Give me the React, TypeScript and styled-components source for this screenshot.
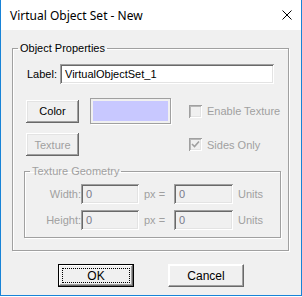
import React from "react"
import styled, { createGlobalStyle } from "styled-components"

const GlobalStyle = createGlobalStyle`
    html, body {
        margin: 0;
        padding: 0;
        background: #ffffff;
    }
    body {
        font-family: "Liberation Sans", Arial, sans-serif;
        font-size: 11px;
    }
`

const Window = styled.div`
    width: 302px;
    height: 296px;
    box-sizing: border-box;
    border: 1px solid #1883d7;
    border-top: none;
    background: #f0f0f0;
    display: flex;
    flex-direction: column;
`

const TitleBar = styled.div`
    height: 30px;
    background: #ffffff;
    display: flex;
    align-items: center;
    justify-content: space-between;
    padding: 0 9px 0 8px;
    font-family: "Noto Sans", "Open Sans", sans-serif;
    font-size: 12px;
    color: #000;
`

const Body = styled.div`
    padding: 12px 12px 0 11px;
    display: flex;
    flex-direction: column;
`

const Group = styled.fieldset<{ $w: number; $pb: number }>`
    margin: 0;
    padding: 0 0 ${(p) => p.$pb}px 0;
    min-width: 0;
    width: ${(p) => p.$w}px;
    box-sizing: border-box;
    border: 1px solid #a0a0a0;
    box-shadow: inset 1px 1px #ffffff, 1px 1px #ffffff;
`

const Legend = styled.legend<{ $disabled?: boolean }>`
    margin-left: 5px;
    padding: 0 2px;
    line-height: 13px;
    color: ${(p) => (p.$disabled ? "#a0a0a0" : "#000")};
`

const Row = styled.div<{ $mt: number; $pl: number }>`
    display: flex;
    align-items: center;
    margin-top: ${(p) => p.$mt}px;
    padding-left: ${(p) => p.$pl}px;
`

const Text = styled.span<{ $w?: number; $disabled?: boolean; $right?: boolean; $ml?: number }>`
    display: inline-block;
    width: ${(p) => (p.$w ? `${p.$w}px` : "auto")};
    margin-left: ${(p) => p.$ml ?? 0}px;
    text-align: ${(p) => (p.$right ? "right" : "left")};
    color: ${(p) => (p.$disabled ? "#a0a0a0" : "#000")};
    white-space: nowrap;
`

const Input = styled.div<{ $w: number; $disabled?: boolean }>`
    width: ${(p) => p.$w}px;
    height: 20px;
    box-sizing: border-box;
    background: ${(p) => (p.$disabled ? "#f0f0f0" : "#ffffff")};
    box-shadow: inset 1px 1px #a0a0a0, inset -1px -1px #ffffff, inset 2px 2px #696969,
        inset -2px -2px #e3e3e3;
    padding: 0 0 0 5px;
    line-height: 20px;
    color: ${(p) => (p.$disabled ? "#7a7a8a" : "#000")};
`

const Button = styled.div<{ $disabled?: boolean; $ml?: number }>`
    width: 53px;
    height: 23px;
    margin-left: ${(p) => p.$ml ?? 0}px;
    box-sizing: border-box;
    background: #f0f0f0;
    box-shadow: inset -1px -1px #696969, inset 1px 1px #ffffff, inset -2px -2px #a0a0a0,
        inset 2px 2px #e3e3e3;
    display: flex;
    align-items: center;
    justify-content: center;
    color: ${(p) => (p.$disabled ? "#a0a0a0" : "#000")};
`

const DialogButton = styled.div<{ $default?: boolean }>`
    position: relative;
    width: 76px;
    height: 23px;
    box-sizing: border-box;
    background: #f0f0f0;
    border: 1px solid ${(p) => (p.$default ? "#000" : "transparent")};
    box-shadow: ${(p) =>
        p.$default
            ? "inset -1px -1px #696969, inset 1px 1px #ffffff, inset -2px -2px #a0a0a0"
            : "inset -1px -1px #a0a0a0, inset 1px 1px #ffffff"};
    display: flex;
    align-items: center;
    justify-content: center;
    font-size: 12px;
    color: #000;
    ${(p) => (p.$default ? "" : "border-top-color: #ffffff; border-left-color: #ffffff; border-right-color: #696969; border-bottom-color: #696969;")}
`

const FocusRect = styled.div`
    position: absolute;
    inset: 3px;
    border: 1px dotted #000;
`

const Swatch = styled.div`
    width: 81px;
    height: 26px;
    margin-left: 11px;
    box-sizing: border-box;
    border: 1px solid #a0a0a0;
    box-shadow: 1px 1px #ffffff;
    padding: 2px;
    background: #f0f0f0;
    display: flex;
`

const SwatchFill = styled.div`
    flex: 1;
    background: #c8c8ff;
`

const Check = styled.label<{ $ml: number }>`
    display: flex;
    align-items: center;
    margin-left: ${(p) => p.$ml}px;
    color: #a0a0a0;
`

const CheckBox = styled.span`
    width: 13px;
    height: 13px;
    box-sizing: border-box;
    background: #f0f0f0;
    box-shadow: inset 1px 1px #a0a0a0, inset -1px -1px #ffffff, inset 2px 2px #b8b8b8,
        inset -2px -2px #e3e3e3;
    margin-right: 5px;
    display: flex;
    align-items: center;
    justify-content: center;
`

const ButtonRow = styled.div`
    display: flex;
    justify-content: center;
    gap: 34px;
    margin-top: 13px;
    padding-left: 1px;
`

const CloseIcon = () => (
    <svg width="10" height="10" viewBox="0 0 10 10">
        <path d="M0.5 0.5 L9.5 9.5 M9.5 0.5 L0.5 9.5" stroke="#000" strokeWidth="1" fill="none" />
    </svg>
)

const CheckMark = () => (
    <svg width="9" height="9" viewBox="0 0 9 9">
        <path d="M1 4 L3.5 6.5 L8 1.5" stroke="#a0a0a0" strokeWidth="1.6" fill="none" />
    </svg>
)

export default function App() {
    return (
        <>
            <GlobalStyle />
            <Window>
                <TitleBar>
                    <span style={{ marginLeft: 1 }}>Virtual Object Set - New</span>
                    <CloseIcon />
                </TitleBar>
                <Body>
                    <Group $w={277} $pb={12}>
                        <Legend>Object Properties</Legend>
                        <Row $mt={9} $pl={14}>
                            <Text $w={33}>Label:</Text>
                            <Input $w={214}>VirtualObjectSet_1</Input>
                        </Row>
                        <Row $mt={14} $pl={13}>
                            <Button>Color</Button>
                            <Swatch>
                                <SwatchFill />
                            </Swatch>
                            <Check $ml={18}>
                                <CheckBox />
                                Enable Texture
                            </Check>
                        </Row>
                        <Row $mt={9} $pl={13}>
                            <Button $disabled>Texture</Button>
                            <Check $ml={110}>
                                <CheckBox>
                                    <CheckMark />
                                </CheckBox>
                                Sides Only
                            </Check>
                        </Row>
                        <Row $mt={9} $pl={11}>
                            <Group $w={257} $pb={7}>
                                <Legend $disabled>Texture Geometry</Legend>
                                <Row $mt={6} $pl={0}>
                                    <Text $w={56} $right $disabled>
                                        Width:
                                    </Text>
                                    <Input $w={58} $disabled>0</Input>
                                    <Text $w={30} $ml={5} $disabled>
                                        px =
                                    </Text>
                                    <Input $w={59} $disabled>0</Input>
                                    <Text $ml={5} $disabled>
                                        Units
                                    </Text>
                                </Row>
                                <Row $mt={6} $pl={0}>
                                    <Text $w={56} $right $disabled>
                                        Height:
                                    </Text>
                                    <Input $w={58} $disabled>0</Input>
                                    <Text $w={30} $ml={5} $disabled>
                                        px =
                                    </Text>
                                    <Input $w={59} $disabled>0</Input>
                                    <Text $ml={5} $disabled>
                                        Units
                                    </Text>
                                </Row>
                            </Group>
                        </Row>
                    </Group>
                    <ButtonRow>
                        <DialogButton $default>
                            OK
                            <FocusRect />
                        </DialogButton>
                        <DialogButton>Cancel</DialogButton>
                    </ButtonRow>
                </Body>
            </Window>
        </>
    )
}
